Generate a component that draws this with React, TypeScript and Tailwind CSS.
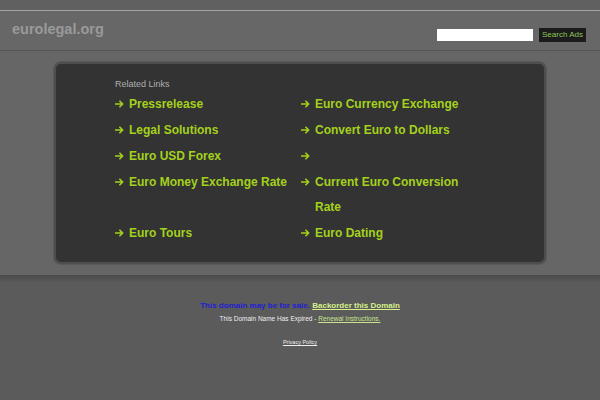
import React from "react";

const font = "font-['Liberation_Sans',Arial,sans-serif]";

const rows: [string, string][] = [
  ["Pressrelease", "Euro Currency Exchange"],
  ["Legal Solutions", "Convert Euro to Dollars"],
  ["Euro USD Forex", ""],
  ["Euro Money Exchange Rate", "Current Euro Conversion Rate"],
  ["Euro Tours", "Euro Dating"],
];

function Arrow() {
  return (
    <svg width="9" height="8" viewBox="0 0 9 8" className="mt-[8px] shrink-0" aria-hidden>
      <path d="M0 4H7.6M4.4 0.8L7.6 4L4.4 7.2" stroke="#a4d11c" strokeWidth="1.6" fill="none" />
    </svg>
  );
}

function RelatedLink({ label }: { label: string }) {
  return (
    <a href="#" className="flex gap-[5px] text-[12px] font-bold leading-[25px] text-[#a4d11c]">
      <Arrow />
      <span>{label}</span>
    </a>
  );
}

export default function App() {
  return (
    <div className={`flex h-[400px] w-[600px] flex-col bg-[#5b5b5b] ${font}`}>
      <div className="h-[10px] bg-[#606060]" />
      <div className="h-px bg-[#a2a2a2]" />
      <header className="flex h-[39px] items-center justify-between bg-[#676767] pl-[12px] pr-[14px]">
        <span className="-mt-[1px] text-[14.5px] font-bold text-[#9a9a9a]">eurolegal.org</span>
        <div className="mt-[9px] flex items-center gap-[6px]">
          <input className="h-[12px] w-[96px] bg-white outline-none" />
          <button className="h-[14px] w-[47px] bg-[#1b1b1b] text-[8px] leading-[14px] text-[#8fc35a]">
            Search Ads
          </button>
        </div>
      </header>
      <div className="h-px bg-[#565656]" />
      <main className="h-[224px] bg-[#666666] px-[54px] pt-[11px]">
        <section className="h-[202px] rounded-[7px] border-2 border-[#4e4e4e] bg-[#333333] pl-[59px] pt-[13px] shadow-[0_0_0_1px_#5a5a5a]">
          <p className="text-[9px] leading-[15px] text-[#aeaeae]">Related Links</p>
          <div className="grid grid-cols-[186px_170px] gap-y-px">
            {rows.map(([a, b]) => (
              <React.Fragment key={a}>
                <RelatedLink label={a} />
                <RelatedLink label={b} />
              </React.Fragment>
            ))}
          </div>
        </section>
      </main>
      <footer className="flex flex-1 flex-col items-center bg-[linear-gradient(to_bottom,#4a4a4a_0px,#5b5b5b_8px)] pt-[25px]">
        <p className="text-[8px] font-bold leading-[12px]">
          <span className="text-[#1f1fd4]">This domain may be for sale. </span>
          <a href="#" className="text-[#d8f08a] underline">Backorder this Domain</a>
        </p>
        <p className="mt-[2px] text-[6.5px] leading-[10px] text-[#eeeeee]">
          This Domain Name Has Expired -{" "}
          <a href="#" className="text-[#c9e68c] underline">Renewal Instructions.</a>
        </p>
        <a href="#" className="mt-[14px] text-[5.5px] leading-[8px] text-[#eeeeee] underline">
          Privacy Policy
        </a>
      </footer>
    </div>
  );
}
